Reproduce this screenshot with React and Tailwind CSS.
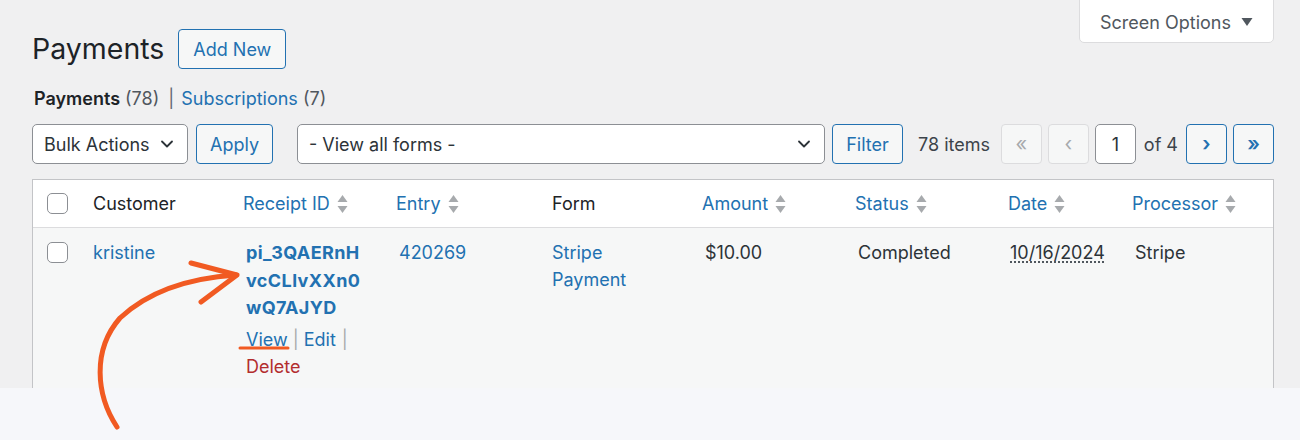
import { ChevronDown } from 'lucide-react'

const font = { fontFamily: 'Inter, "Noto Sans", sans-serif' }

const SortIcon = () => (
  <svg width="11" height="20" viewBox="0 0 11 20" className="ml-[7px] shrink-0">
    <path d="M5.5 1 L10.5 8 H0.5 Z" fill="#a7aaad" />
    <path d="M5.5 19 L10.5 12 H0.5 Z" fill="#a7aaad" />
  </svg>
)

const Checkbox = () => (
  <span className="block w-[21px] h-[21px] rounded-[5px] border border-[#8c8f94] bg-white" />
)

const SortHead = ({ label }) => (
  <div className="flex items-center px-[10px] text-[#2271b1]">
    {label}
    <SortIcon />
  </div>
)

const PageBtn = ({ children, disabled }) => (
  <span
    className={
      disabled
        ? 'w-[41px] h-[40px] flex items-center justify-center rounded-[4px] border border-[#dcdcde] bg-[#f6f7f7] text-[#a7aaad] text-[20px]'
        : 'w-[41px] h-[40px] flex items-center justify-center rounded-[4px] border border-[#2271b1] bg-[#f6f7f7] text-[#2271b1] text-[20px] font-semibold'
    }
  >
    {children}
  </span>
)

const App = () => {
  return (
    <div className="w-[1300px] h-[440px] relative overflow-hidden bg-[#f6f7fa]" style={font}>
      <div className="h-[388px] overflow-hidden bg-[#f0f0f1] pl-[32px] pr-[26px] text-[18px] text-[#2c3338]">
        {/* heading + screen options */}
        <div className="flex justify-between items-start">
          <div className="flex items-center mt-[29px]">
            <h1 className="text-[28.5px] leading-[40px] text-[#1d2327] font-normal">Payments</h1>
            <button className="ml-[14px] h-[40px] px-[14px] rounded-[4px] border border-[#2271b1] bg-[#f6f7f7] text-[#2271b1] text-[18px]">
              Add New
            </button>
          </div>
          <button className="h-[44px] w-[195px] -mt-px pt-[2px] flex items-center justify-center gap-[10px] rounded-b-[5px] border border-[#dcdcde] bg-white text-[#50575e] text-[18px]">
            Screen Options
            <svg width="12" height="10" viewBox="0 0 12 10">
              <path d="M0.5 1 H11.5 L6 9 Z" fill="#50575e" />
            </svg>
          </button>
        </div>

        {/* views */}
        <div className="mt-[17px] h-[24px] flex items-center pl-[2px]">
          <span className="font-semibold text-[#1d2327]">Payments</span>
          <span className="ml-[5px] text-[#50575e]">(78)</span>
          <span className="ml-[9px] mr-[7px] text-[#646970]">|</span>
          <span className="text-[#2271b1]">Subscriptions</span>
          <span className="ml-[5px] text-[#50575e]">(7)</span>
        </div>

        {/* toolbar */}
        <div className="mt-[14px] h-[40px] flex items-center">
          <div className="w-[156px] h-[40px] flex items-center justify-between pl-[11px] pr-[10px] rounded-[5px] border border-[#8c8f94] bg-white">
            Bulk Actions
            <ChevronDown size={20} strokeWidth={2.2} className="text-[#2c3338]" />
          </div>
          <button className="ml-[8px] w-[77px] h-[40px] rounded-[4px] border border-[#2271b1] bg-[#f6f7f7] text-[#2271b1]">
            Apply
          </button>
          <div className="ml-[24px] w-[528px] h-[40px] flex items-center justify-between pl-[11px] pr-[10px] rounded-[5px] border border-[#8c8f94] bg-white">
            - View all forms -
            <ChevronDown size={20} strokeWidth={2.2} className="text-[#2c3338]" />
          </div>
          <button className="ml-[7px] w-[71px] h-[40px] rounded-[4px] border border-[#2271b1] bg-[#f6f7f7] text-[#2271b1]">
            Filter
          </button>
          <span className="ml-[15px] text-[#3c434a]">78 items</span>
          <div className="ml-auto flex items-center gap-[6px]">
            <PageBtn disabled>«</PageBtn>
            <PageBtn disabled>‹</PageBtn>
            <span className="w-[41px] h-[40px] flex items-center justify-center rounded-[5px] border border-[#8c8f94] bg-white">
              1
            </span>
            <span className="mx-[2px] text-[#3c434a]">of 4</span>
            <PageBtn>›</PageBtn>
            <PageBtn>»</PageBtn>
          </div>
        </div>

        {/* table */}
        <div className="mt-[15px] border border-[#c3c4c7] bg-[#f6f7f7]">
          <div className="grid grid-cols-[50px_150px_153px_156px_150px_153px_153px_124px_1fr] h-[48px] items-center bg-white border-b border-[#dcdcde]">
            <div className="pl-[14px]">
              <Checkbox />
            </div>
            <div className="px-[10px] text-[#1d2327]">Customer</div>
            <SortHead label="Receipt ID" />
            <SortHead label="Entry" />
            <div className="px-[10px] text-[#1d2327]">Form</div>
            <SortHead label="Amount" />
            <SortHead label="Status" />
            <SortHead label="Date" />
            <SortHead label="Processor" />
          </div>
          <div className="grid grid-cols-[50px_150px_153px_156px_150px_153px_153px_124px_1fr] items-start pt-[11px] pb-[40px] leading-[27px]">
            <div className="pl-[14px] pt-[3px]">
              <Checkbox />
            </div>
            <div className="px-[10px] text-[#2271b1]">kristine</div>
            <div className="pl-[13px] pr-[4px]">
              <div className="font-bold text-[#2271b1] text-[18px] tracking-[0.4px] leading-[27.5px]">
                <div>pi_3QAERnH</div>
                <div>vcCLlvXXn0</div>
                <div>wQ7AJYD</div>
              </div>
              <div className="mt-[4px] flex items-center text-[#2271b1]">
                <span>View</span>
                <span className="mx-[5px] text-[#a7aaad]">|</span>
                <span>Edit</span>
                <span className="ml-[6px] text-[#a7aaad]">|</span>
              </div>
              <div className="text-[#b32d2e]">Delete</div>
            </div>
            <div className="pl-[13px] text-[#2271b1]">420269</div>
            <div className="px-[10px] text-[#2271b1]">
              Stripe
              <br />
              Payment
            </div>
            <div className="pl-[13px]">$10.00</div>
            <div className="pl-[13px]">Completed</div>
            <div className="pl-[12px]">
              <span className="underline decoration-dotted decoration-[#50575e] underline-offset-[3px]">10/16/2024</span>
            </div>
            <div className="pl-[13px]">Stripe</div>
          </div>
        </div>
      </div>

      {/* annotation overlay */}
      <svg
        className="absolute left-0 top-0 pointer-events-none"
        width="1300"
        height="440"
        viewBox="0 0 1300 440"
      >
        <path
          d="M117 427 C96 395 92 350 120 318 C150 290 190 278 236 275"
          fill="none"
          stroke="#f15a22"
          strokeWidth="5"
          strokeLinecap="round"
        />
        <path
          d="M191 263 L237 275 L201 302"
          fill="none"
          stroke="#f15a22"
          strokeWidth="5"
          strokeLinecap="round"
          strokeLinejoin="round"
        />
        <path d="M240 348 L288 348" stroke="#f15a22" strokeWidth="3" strokeLinecap="round" />
      </svg>
    </div>
  )
}

export default App
